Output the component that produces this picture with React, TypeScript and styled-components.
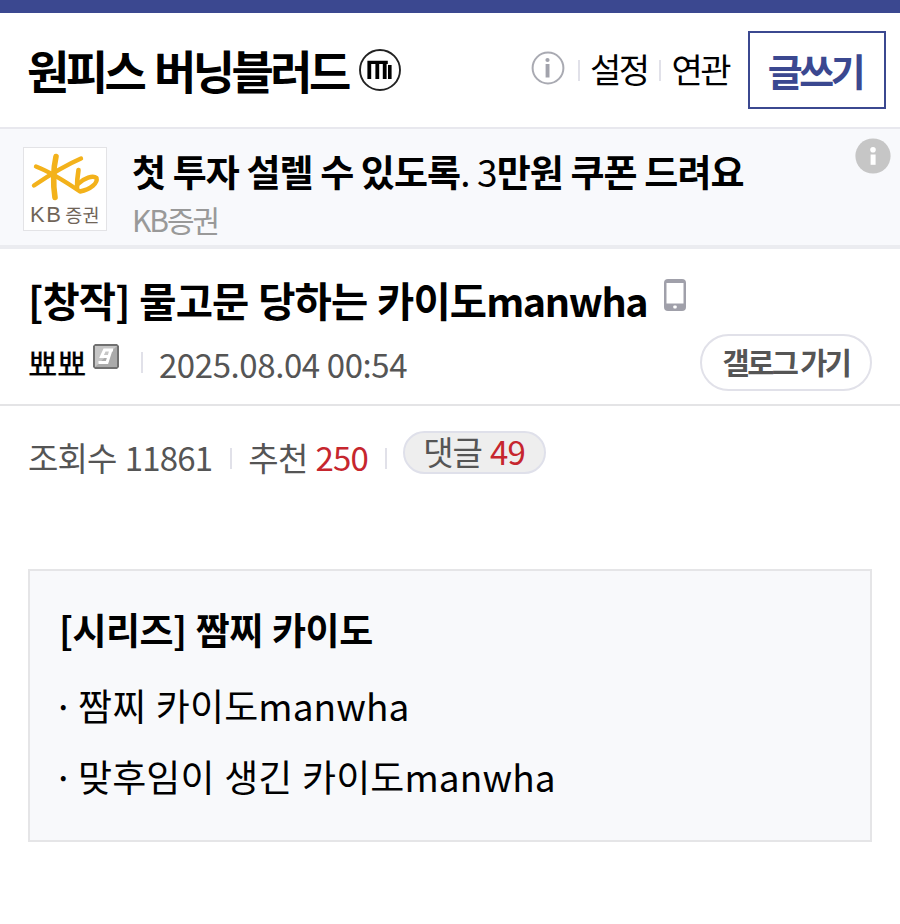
import React from 'react';
import styled, { createGlobalStyle } from 'styled-components';

const GlobalStyle = createGlobalStyle`
  * {
    box-sizing: border-box;
  }

  body {
    margin: 0;
    background: #fff;
    color: #000;
    font-family: 'Noto Sans CJK KR', sans-serif;
  }

  svg {
    display: block;
    flex-shrink: 0;
  }
`;

const posts = ['짬찌 카이도manwha', '맞후임이 생긴 카이도manwha'];

const MinorMark = () => (
  <svg width="42" height="42" viewBox="0 0 42 42">
    <circle cx="21" cy="21" r="20" fill="none" stroke="#222" strokeWidth="1.9" />
    <path d="M8.4 11.7H28.8V15H27.6V30H23.8V15H20.2V30H16.4V15H12.2V30H8.4zM29 16H32.6V30H29z" fill="#000" />
  </svg>
);

const InfoOutline = () => (
  <svg width="34" height="34" viewBox="0 0 34 34">
    <circle cx="17" cy="17" r="15.4" fill="none" stroke="#a9aab2" strokeWidth="2" />
    <circle cx="16.5" cy="9" r="2.1" fill="#a2a3ac" />
    <path d="M14.6 13h3.9v13.5h-3.9z" fill="#a2a3ac" />
  </svg>
);

const InfoSolid = () => (
  <svg width="36" height="36" viewBox="0 0 36 36">
    <circle cx="18" cy="18" r="17.6" fill="#c6c6c6" />
    <circle cx="18" cy="11.7" r="2.8" fill="#fff" />
    <path d="M15.6 16.5h5v10.3h-5z" fill="#fff" />
  </svg>
);

const KbSymbol = () => (
  <svg width="82" height="82" viewBox="0 0 82 82">
    <g fill="none" stroke="#f3b21b" strokeLinecap="round" strokeLinejoin="round">
      <path d="M32 8.5C29.5 20 29 36 31 49.5" strokeWidth="5.6" />
      <path d="M57 10.5C42 17 24 28 10 37.5" strokeWidth="4.4" />
      <path d="M12 18.5C24 23 42 34 56 43.5C67 41 74 35 72.5 30C69 27 60 30 54 36" strokeWidth="4.4" />
      <path d="M54.5 22C53.5 28 53 33 53 40" strokeWidth="4.6" />
    </g>
  </svg>
);

const GallogIcon = () => (
  <svg width="26" height="25" viewBox="0 0 26 25">
    <path d="M2 0H24L26 2V23L24 25H2L0 23V2z" fill="#707070" />
    <path d="M2 2H24V23H2z" fill="#aaa" />
    <path d="M2 2H24L2 23z" fill="#c6c6c6" />
    <path d="M20 6H11.5L8.5 12.5H16M18 6L14 18.5H5.5" fill="none" stroke="#fff" strokeWidth="3" />
  </svg>
);

const PhoneIcon = () => (
  <svg width="22" height="32" viewBox="0 0 22 32">
    <rect width="22" height="32" rx="4" fill="#a0a0aa" />
    <rect x="2.5" y="4" width="17" height="20.5" fill="#fff" />
    <rect x="9.3" y="26.5" width="3.4" height="3" rx="1" fill="#fff" />
  </svg>
);

const App = () => (
  <>
    <GlobalStyle />
    <TopBar />
    <Header>
      <GalleryName>원피스 버닝블러드</GalleryName>
      <MinorMark />
      <HeaderMenu>
        <InfoOutline />
        <Divider $left={13} $right={10} />
        <MenuLink>설정</MenuLink>
        <Divider $left={12} $right={10} />
        <MenuLink>연관</MenuLink>
        <WriteButton>글쓰기</WriteButton>
      </HeaderMenu>
    </Header>

    <AdBanner>
      <AdLogo>
        <KbSymbol />
        <AdLogoName><AdLogoLatin>KB</AdLogoLatin>증권</AdLogoName>
      </AdLogo>
      <AdText>
        <AdTitle>첫 투자 설렐 수 있도록<Light>. 3</Light>만원 쿠폰 드려요</AdTitle>
        <AdSponsor>KB증권</AdSponsor>
      </AdText>
      <AdInfo><InfoSolid /></AdInfo>
    </AdBanner>

    <PostHead>
      <PostTitle>
        <span>[창작] 물고문 당하는 카이도<TitleLatin>manwha</TitleLatin></span>
        <PhoneIcon />
      </PostTitle>
      <PostMeta>
        <Nickname>뾰뾰</Nickname>
        <GallogIcon />
        <Divider $left={21} $right={17} />
        <DateText>2025.08.04 00:54</DateText>
        <GallogButton>갤로그 가기</GallogButton>
      </PostMeta>
    </PostHead>

    <Stats>
      <Stat>조회수 11861</Stat>
      <Divider $left={18} $right={16} />
      <Stat>추천 <Count>250</Count></Stat>
      <Divider $left={17} $right={17} />
      <CommentPill>댓글 <Count>49</Count></CommentPill>
    </Stats>

    <SeriesBox>
      <SeriesTitle>[시리즈] 짬찌 카이도</SeriesTitle>
      {posts.map((title) => (
        <SeriesItem key={title}><Bullet>·</Bullet>{title}</SeriesItem>
      ))}
    </SeriesBox>
  </>
);

const TopBar = styled.div`
  height: 13px;
  background: #3b4890;
`;

const Header = styled.header`
  display: flex;
  align-items: center;
  height: 116px;
  padding: 0 14px 0 28px;
  border-bottom: 2px solid #e8e8ee;
`;

const GalleryName = styled.h1`
  margin: -2px 11px 0 -1px;
  font-size: 46px;
  font-weight: 700;
  line-height: 60px;
  letter-spacing: -3.6px;
  word-spacing: 4px;
  white-space: nowrap;
`;

const HeaderMenu = styled.nav`
  display: flex;
  align-items: center;
  margin-left: auto;

  > svg {
    margin-top: -4px;
  }
`;

const Divider = styled.i<{ $left: number; $right: number }>`
  width: 2px;
  height: 21px;
  margin: 0 ${(p) => p.$right}px 0 ${(p) => p.$left}px;
  background: #e1e1e9;
`;

const MenuLink = styled.a`
  margin-top: -2px;
  font-size: 34px;
  line-height: 44px;
  letter-spacing: -2.5px;
`;

const WriteButton = styled.button`
  width: 138px;
  height: 78px;
  margin-left: 19px;
  padding: 0 4px 2px 0;
  border: 2px solid #3b4890;
  background: #fff;
  color: #3b4890;
  font-family: inherit;
  font-size: 38px;
  font-weight: 700;
  letter-spacing: -3.5px;
`;

const AdBanner = styled.section`
  display: flex;
  height: 120px;
  padding: 18px 9px 0 23px;
  border-bottom: 4px solid #ebecf0;
  background: #f8f9fc;
`;

const AdLogo = styled.div`
  position: relative;
  width: 84px;
  height: 84px;
  border: 1px solid #e3e3e6;
  background: #fff;
`;

const AdLogoName = styled.div`
  position: absolute;
  bottom: 3px;
  left: 6px;
  color: #716558;
  font-size: 18.5px;
  line-height: 24px;
  white-space: nowrap;
`;

const AdLogoLatin = styled.span`
  display: inline-block;
  margin-right: 3px;
  font-family: 'Liberation Sans', sans-serif;
  font-size: 22px;
  letter-spacing: 1.5px;
`;

const AdText = styled.div`
  margin: -1px 0 0 25px;
`;

const AdTitle = styled.div`
  font-size: 37px;
  font-weight: 700;
  line-height: 50px;
  letter-spacing: -0.9px;
  white-space: nowrap;
`;

const Light = styled.span`
  font-weight: 400;
`;

const AdSponsor = styled.div`
  color: #999;
  font-size: 30px;
  line-height: 46px;
  letter-spacing: -2.1px;
`;

const AdInfo = styled.div`
  margin: -9px 0 0 auto;
`;

const PostHead = styled.section`
  height: 157px;
  padding: 24px 28px 0;
  border-bottom: 2px solid #e4e4e6;
`;

const PostTitle = styled.h2`
  display: flex;
  gap: 17px;
  height: 56px;
  margin: 0;
  font-size: 40.5px;
  font-weight: 700;
  line-height: 54px;
  letter-spacing: -0.9px;
  word-spacing: 1.5px;
  white-space: nowrap;

  svg {
    margin-top: 6px;
  }
`;

const TitleLatin = styled.span`
  font-size: 39.5px;
  letter-spacing: -1.4px;
`;

const PostMeta = styled.div`
  display: flex;
  align-items: center;
  height: 66px;

  > svg {
    margin: -11px 1px 0 7px;
  }
`;

const Nickname = styled.b`
  font-size: 32px;
  font-weight: 400;
  letter-spacing: -0.5px;
  -webkit-text-stroke: 0.2px #000;
`;

const DateText = styled.time`
  margin: 3px 0 0 -1px;
  color: #555;
  font-size: 33px;
  letter-spacing: -0.4px;
`;

const GallogButton = styled.button`
  width: 172px;
  height: 57px;
  margin-left: auto;
  padding: 0 0 2px;
  border: 2px solid #e1e1e9;
  border-radius: 29px;
  background: #fff;
  color: #555;
  font-family: inherit;
  font-size: 29.5px;
  font-weight: 700;
  letter-spacing: -2.6px;
`;

const Stats = styled.section`
  display: flex;
  align-items: center;
  height: 104px;
  padding: 0 28px;
  color: #555;
  font-size: 33px;
  word-spacing: 1.5px;
`;

const Stat = styled.span`
  margin-top: -3px;
  letter-spacing: -0.8px;
`;

const Count = styled.span`
  color: #c6262e;
`;

const CommentPill = styled.span`
  width: 143px;
  height: 43px;
  padding: 0 18px;
  margin: 0 0 12px -1px;
  border: 2px solid #dfe0ea;
  border-radius: 22px;
  background: #eee;
  line-height: 36px;
  letter-spacing: -0.9px;
  white-space: nowrap;
`;

const SeriesBox = styled.section`
  height: 273px;
  margin: 59px 28px 0;
  padding: 22px 29px;
  border: 2px solid #e5e5e7;
  background: #f8f9fb;
`;

const SeriesTitle = styled.h3`
  margin: 0 0 4px;
  font-size: 37px;
  font-weight: 700;
  line-height: 73px;
  letter-spacing: -0.5px;
  word-spacing: 1.3px;
`;

const SeriesItem = styled.div`
  font-size: 37px;
  line-height: 71px;
  letter-spacing: 0.1px;
  word-spacing: 1.2px;
  white-space: nowrap;
`;

const Bullet = styled.span`
  display: inline-block;
  width: 25px;
  margin-left: -6px;
`;

export default App;
